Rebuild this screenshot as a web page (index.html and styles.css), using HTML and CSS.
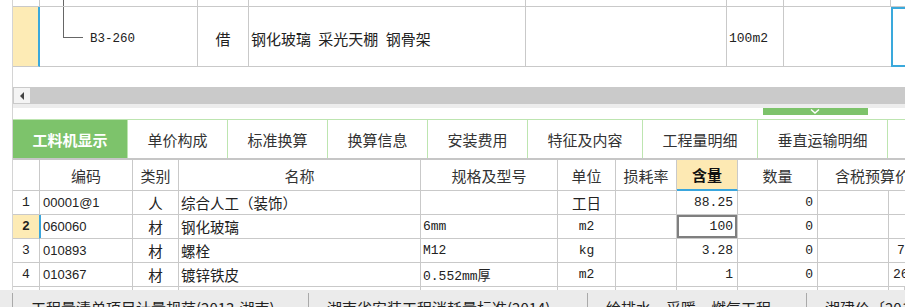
FILE: index.html
```html
<!DOCTYPE html>
<html lang="zh-CN">

<head>
    <meta charset="UTF-8">
    <meta name="viewport" content="width=device-width, initial-scale=1.0">
    <title>工料机显示</title>
    <link rel="stylesheet" href="styles.css">
</head>

<body>

    <div class="main">
        <!-- 定额行 -->
        <div class="quota">
            <div class="quota-row prev">
                <div class="q-cell"></div>
                <div class="q-cell q-code"><span class="tree-line"></span></div>
                <div class="q-cell"></div>
                <div class="q-cell"></div>
                <div class="q-cell"></div>
                <div class="q-cell"></div>
                <div class="q-cell"></div>
                <div class="q-cell q-last"></div>
            </div>
            <div class="quota-row current">
                <div class="q-cell q-num"></div>
                <div class="q-cell q-code">
                    <span class="tree-branch"></span>
                    <span class="code-text">B3-260</span>
                </div>
                <div class="q-cell q-type">借</div>
                <div class="q-cell q-name">钢化玻璃 采光天棚 钢骨架</div>
                <div class="q-cell"></div>
                <div class="q-cell q-unit">100m2</div>
                <div class="q-cell q-blank"></div>
                <div class="q-cell q-focus"></div>
            </div>
        </div>

        <div class="spacer"></div>

        <div class="hscroll">
            <span class="scroll-btn"><span class="arrow-left"></span></span>
        </div>

        <div class="splitter">
            <span class="handle">
                <svg width="105" height="7" viewBox="0 0 105 7">
                    <polyline points="48,1.5 52,5 56,1.5" fill="none" stroke="#fff" stroke-width="1.5" />
                </svg>
            </span>
        </div>

        <div class="tabs">
            <div class="tab active" style="width:115px">工料机显示</div>
            <div class="tab" style="width:100px">单价构成</div>
            <div class="tab" style="width:100px">标准换算</div>
            <div class="tab" style="width:100px">换算信息</div>
            <div class="tab" style="width:100px">安装费用</div>
            <div class="tab" style="width:115px">特征及内容</div>
            <div class="tab" style="width:115px">工程量明细</div>
            <div class="tab" style="width:130px">垂直运输明细</div>
            <div class="tab tab-rest"></div>
        </div>

        <!-- 工料机表格 -->
        <div class="grid">
            <div class="grid-row head">
                <div class="g-cell"></div>
                <div class="g-cell">编码</div>
                <div class="g-cell">类别</div>
                <div class="g-cell">名称</div>
                <div class="g-cell">规格及型号</div>
                <div class="g-cell">单位</div>
                <div class="g-cell">损耗率</div>
                <div class="g-cell sorted">含量</div>
                <div class="g-cell">数量</div>
                <div class="g-cell price-head">含税预算价</div>
            </div>

            <div class="grid-row">
                <div class="g-cell num">1</div>
                <div class="g-cell code">00001@1</div>
                <div class="g-cell kind">人</div>
                <div class="g-cell name">综合人工（装饰）</div>
                <div class="g-cell spec"></div>
                <div class="g-cell unit">工日</div>
                <div class="g-cell"></div>
                <div class="g-cell value">88.25</div>
                <div class="g-cell value">0</div>
                <div class="g-cell"></div>
                <div class="g-cell price"></div>
            </div>

            <div class="grid-row selected">
                <div class="g-cell num">2</div>
                <div class="g-cell code">060060</div>
                <div class="g-cell kind">材</div>
                <div class="g-cell name">钢化玻璃</div>
                <div class="g-cell spec">6mm</div>
                <div class="g-cell unit mono">m2</div>
                <div class="g-cell"></div>
                <div class="g-cell value editing">100</div>
                <div class="g-cell value">0</div>
                <div class="g-cell"></div>
                <div class="g-cell price"></div>
            </div>

            <div class="grid-row">
                <div class="g-cell num">3</div>
                <div class="g-cell code">010893</div>
                <div class="g-cell kind">材</div>
                <div class="g-cell name">螺栓</div>
                <div class="g-cell spec">M12</div>
                <div class="g-cell unit mono">kg</div>
                <div class="g-cell"></div>
                <div class="g-cell value">3.28</div>
                <div class="g-cell value">0</div>
                <div class="g-cell"></div>
                <div class="g-cell price p-short">7.36</div>
            </div>

            <div class="grid-row">
                <div class="g-cell num">4</div>
                <div class="g-cell code">010367</div>
                <div class="g-cell kind">材</div>
                <div class="g-cell name">镀锌铁皮</div>
                <div class="g-cell spec">0.552mm厚</div>
                <div class="g-cell unit mono">m2</div>
                <div class="g-cell"></div>
                <div class="g-cell value">1</div>
                <div class="g-cell value">0</div>
                <div class="g-cell"></div>
                <div class="g-cell price">26.54</div>
            </div>

            <div class="grid-row stub">
                <div class="g-cell"></div>
                <div class="g-cell"></div>
                <div class="g-cell"></div>
                <div class="g-cell"></div>
                <div class="g-cell"></div>
                <div class="g-cell"></div>
                <div class="g-cell"></div>
                <div class="g-cell"></div>
                <div class="g-cell"></div>
                <div class="g-cell"></div>
                <div class="g-cell"></div>
            </div>
        </div>
    </div>

    <div class="statusbar">
        <div class="status-item" style="width:296px">工程量清单项目计量规范(2013-湖南)</div>
        <div class="status-item" style="width:279px">湖南省安装工程消耗量标准(2014)</div>
        <div class="status-item" style="width:219px">给排水、采暖、燃气工程</div>
        <div class="status-item">湘建价〔2014〕</div>
    </div>

</body>

</html>
```

FILE: styles.css
```css
* {
    box-sizing: border-box;
}

body {
    margin: 0;
    width: 905px;
    height: 307px;
    overflow: hidden;
    background-color: #fff;
    font-family: "Noto Sans CJK SC", "Noto Sans", sans-serif;
    color: #222;
}

.main {
    margin-left: 12px;
    border-left: 1px solid #d4d4d4;
}

/* 定额行 */
.quota-row {
    display: grid;
    grid-template-columns: 27px 158px 51px 277px 201px 57px 107px 1fr;
}

.q-cell {
    border-right: 1px solid #c9c9c9;
    border-bottom: 1px solid #c9c9c9;
    font-size: 15px;
    display: flex;
    align-items: center;
    padding-top: 4px;
}

.prev {
    height: 7px;
}

.prev .q-cell {
    padding-top: 0;
    align-items: stretch;
}

.prev .q-last {
    border-right: none;
}

.current {
    height: 60px;
}

.q-num {
    background-color: #fdebb5;
    border-right: 2px solid #3aa9dc;
}

.tree-line {
    margin-left: 23px;
    border-left: 1px solid #666;
}

.q-code {
    align-items: flex-start;
}

.current .q-code {
    padding-top: 0;
}

.tree-branch {
    margin-left: 23px;
    width: 20px;
    height: 31px;
    border-left: 1px solid #666;
    border-bottom: 1px solid #666;
}

.code-text {
    align-self: center;
    margin: 4px 0 0 7px;
    font-family: "Liberation Mono", monospace;
    font-size: 12.5px;
}

.q-type {
    justify-content: center;
}

.q-name {
    padding-left: 2px;
    word-spacing: 4px;
}

.q-unit {
    padding-left: 2px;
    font-family: "Liberation Mono", monospace;
    font-size: 13px;
}

.q-blank {
    border-right: none;
}

.q-focus {
    border: 2px solid #3aa9dc;
    border-right: none;
}

.spacer {
    height: 20px;
}

/* 横向滚动条 */
.hscroll {
    height: 17px;
    background-color: #cacaca;
    padding: 1px;
    display: flex;
}

.scroll-btn {
    width: 16px;
    background-color: #f4f4f4;
    display: flex;
    align-items: center;
    justify-content: center;
}

.arrow-left {
    width: 0;
    height: 0;
    border-top: 4px solid transparent;
    border-bottom: 4px solid transparent;
    border-right: 4px solid #444;
}

.splitter {
    height: 15px;
    padding: 4px 0 0 750px;
    background: linear-gradient(#ededed 0, #ededed 4px, #fff 4px);
}

.handle {
    display: block;
    width: 105px;
    height: 7px;
    background-color: #7dc36b;
}

.handle svg {
    display: block;
}

/* 页签 */
.tabs {
    display: flex;
    height: 41px;
    border-top: 1px solid #bde5b0;
    border-bottom: 2px solid #c6c6c6;
}

.tab {
    flex: none;
    display: flex;
    align-items: center;
    justify-content: center;
    border-right: 1px solid #bde5b0;
    font-size: 15px;
    color: #333;
}

.tab.active {
    background-color: #7dc36b;
    color: #fff;
    font-weight: bold;
}

.tab-rest {
    flex: 1;
    border-right: none;
}

/* 表格 */
.grid-row {
    display: grid;
    grid-template-columns: 27px 93px 46px 242px 137px 58px 61px 61px 80px 71px 1fr;
    height: 24px;
}

.g-cell {
    border-right: 1px solid #c9c9c9;
    border-bottom: 1px solid #c9c9c9;
    display: flex;
    align-items: center;
    font-size: 14.5px;
    white-space: nowrap;
}

.head {
    height: 31px;
}

.head .g-cell {
    justify-content: center;
    font-size: 15px;
    color: #333;
}

.head .sorted {
    background-color: #fde9b3;
    border-bottom: 2px solid #3aa6dd;
    font-weight: bold;
    color: #111;
}

.head .price-head {
    grid-column: span 2;
    justify-content: flex-start;
    padding-left: 17px;
    border-right: none;
}

.num {
    justify-content: center;
    font-family: "Liberation Mono", monospace;
    font-size: 13px;
}

.code {
    padding-left: 3px;
    font-family: "Liberation Sans", sans-serif;
    font-size: 13px;
}

.kind,
.unit {
    justify-content: center;
}

.name {
    padding-left: 2px;
}

.spec,
.unit.mono {
    font-family: "Liberation Mono", "Noto Sans CJK SC", monospace;
    font-size: 13px;
}

.spec {
    padding-left: 2px;
}

.value {
    justify-content: flex-end;
    padding-right: 4px;
    font-family: "Liberation Mono", monospace;
    font-size: 13px;
}

.price {
    border-right: none;
    padding-left: 4px;
    font-family: "Liberation Mono", monospace;
    font-size: 13px;
}

.price.p-short {
    padding-left: 8px;
}

.selected .num {
    background-color: #fdebb5;
    border-right-color: #3aa6dd;
    font-weight: bold;
}

.selected .code {
    box-shadow: inset 1px 0 0 #3aa6dd;
}

.editing {
    box-shadow: inset 0 0 0 2px #7f7f7f;
}

.stub {
    height: 3px;
}

.stub .g-cell {
    border-bottom: none;
}

/* 底部状态栏 */
.statusbar {
    display: flex;
    height: 30px;
    padding-left: 12px;
    background-color: #ebebeb;
}

.status-item {
    flex: none;
    margin-top: 3px;
    padding: 5px 0 0 18px;
    border-left: 1px solid #a9a9a9;
    font-size: 15px;
    line-height: 20px;
    color: #222;
    white-space: nowrap;
}
```
